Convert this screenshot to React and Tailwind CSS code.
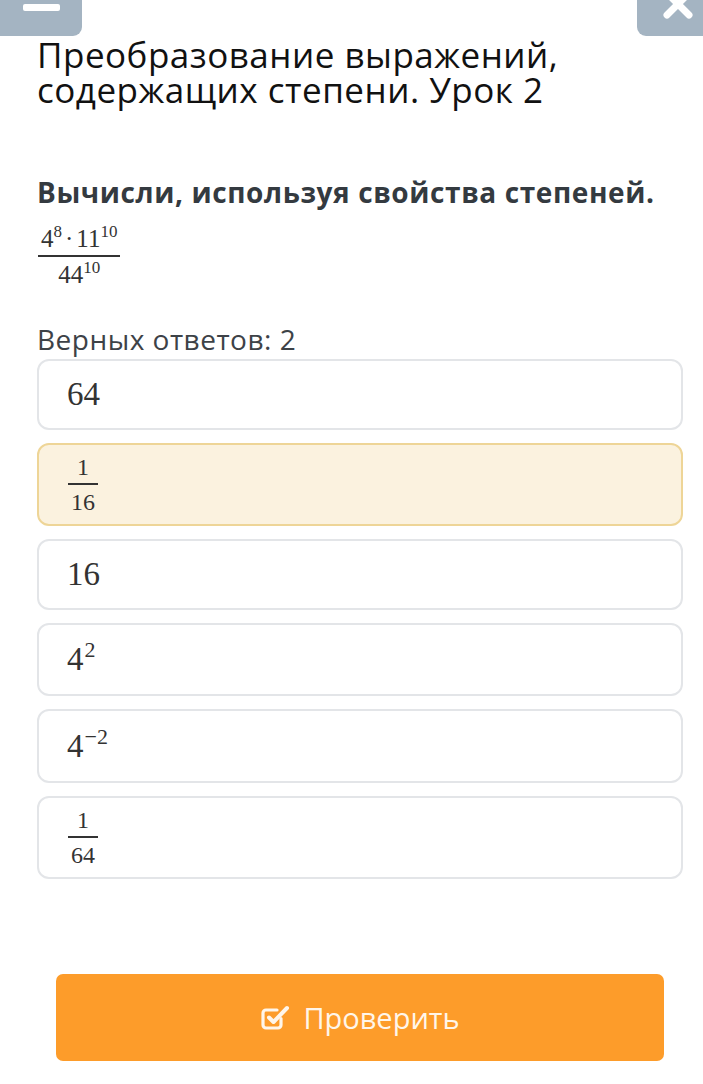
import React from 'react'

const MATH = "font-['Liberation_Serif',serif]"

function Frac({ num, den, size, line }) {
  return (
    <span className={`inline-flex flex-col items-center ${MATH} ${size} text-[#333]`}>
      <span className="px-[3px] pb-[4px] leading-none whitespace-nowrap">{num}</span>
      <span className={`w-full ${line} bg-[#333]`} />
      <span className="px-[3px] pt-[5px] leading-none whitespace-nowrap">{den}</span>
    </span>
  )
}

const VARIANTY = [
  { id: 1, h: 'h-[71px]', body: <span className={`${MATH} text-[33px] leading-none text-[#333]`}>64</span> },
  {
    id: 2,
    h: 'h-[83px]',
    vybran: true,
    body: <span className="ml-[1px]"><Frac num="1" den="16" size="text-[24px]" line="h-[2px]" /></span>,
  },
  { id: 3, h: 'h-[71px]', body: <span className={`${MATH} text-[33px] leading-none text-[#333]`}>16</span> },
  {
    id: 4,
    h: 'h-[73px]',
    body: (
      <span className={`${MATH} text-[33px] leading-none text-[#333]`}>
        4<sup className="text-[22px] top-[-13px] ml-[1px]">2</sup>
      </span>
    ),
  },
  {
    id: 5,
    h: 'h-[74px]',
    body: (
      <span className={`${MATH} text-[33px] leading-none text-[#333]`}>
        4<sup className="text-[22px] top-[-13px] ml-[1px]">−2</sup>
      </span>
    ),
  },
  {
    id: 6,
    h: 'h-[83px]',
    body: <span className="ml-[1px]"><Frac num="1" den="64" size="text-[24px]" line="h-[2px]" /></span>,
  },
]

export default function App() {
  return (
    <div className="w-[703px] h-[1084px] bg-white overflow-hidden font-['Open_Sans',sans-serif]">
      {/* Верхние кнопки */}
      <div className="flex justify-between h-[37px]">
        <div className="w-[82px] h-[36px] bg-[#a4b4c2] rounded-br-[9px] flex justify-center">
          <span className="mt-[4px] w-[37px] h-[7px] rounded-[2px] bg-white" />
        </div>
        <div className="w-[66px] h-[36px] bg-[#a4b4c2] rounded-bl-[9px] flex justify-center overflow-hidden">
          <svg width="34" height="34" viewBox="0 0 34 34" className="-mt-[13px] ml-[16px]">
            <path d="M6 6 L28 28 M28 6 L6 28" stroke="#fff" strokeWidth="7" strokeLinecap="round" />
          </svg>
        </div>
      </div>

      <div className="pl-[37px] pr-[20px]">
        <h1 className="text-[35px] leading-[35px] text-[#111] tracking-[0.5px]">
          Преобразование выражений,
          <br />
          содержащих степени. Урок 2
        </h1>

        <p className="mt-[67px] text-[28px] leading-[36px] font-bold text-[#343a40] tracking-[0.6px]">
          Вычисли, используя свойства степеней.
        </p>

        <div className="mt-[16px] ml-[1px]">
          <Frac
            size="text-[25px]"
            line="h-[2px]"
            num={
              <>
                4<sup className="text-[17px] top-[-10px]">8</sup>
                <span className="mx-[3px]">·</span>11<sup className="text-[17px] top-[-10px]">10</sup>
              </>
            }
            den={
              <>
                44<sup className="text-[17px] top-[-10px]">10</sup>
              </>
            }
          />
        </div>

        <p className="mt-[36px] text-[28px] leading-[32px] text-[#3d4247] tracking-[0.5px]">Верных ответов: 2</p>

        <div className="mt-[4px] flex flex-col gap-[13px]">
          {VARIANTY.map((v) => (
            <div
              key={v.id}
              className={`${v.h} flex items-center pl-[28px] rounded-[12px] border-2 ${
                v.vybran ? 'bg-[#fbf2df] border-[#eed597]' : 'bg-white border-[#e3e5e8]'
              }`}
            >
              {v.body}
            </div>
          ))}
        </div>
      </div>

      <div className="mt-[95px] ml-[56px] mr-[39px]">
        <button className="w-full h-[87px] rounded-[7px] bg-[#fd9c2a] flex items-center justify-center gap-[13px] text-[#fff6ea]">
          <svg width="30" height="30" viewBox="0 0 30 30" fill="none">
            <path
              d="M21 15.5V22a3 3 0 0 1-3 3H6a3 3 0 0 1-3-3V10a3 3 0 0 1 3-3h11"
              stroke="currentColor"
              strokeWidth="3.2"
              strokeLinecap="round"
            />
            <path d="M9 14.5l4.5 4.5L27 5" stroke="currentColor" strokeWidth="4" strokeLinecap="round" strokeLinejoin="round" />
          </svg>
          <span className="text-[29px] leading-none">Проверить</span>
        </button>
      </div>
    </div>
  )
}
